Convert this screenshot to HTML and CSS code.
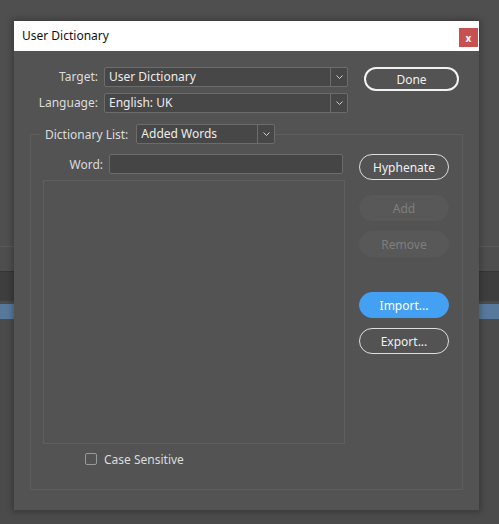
FILE: index.html
```html
<!DOCTYPE html>
<html lang="en">
<head>
    <meta charset="UTF-8">
    <title>User Dictionary</title>
    <link rel="stylesheet" href="styles.css">
</head>
<body>
    <div class="app">
        <div class="app-top"></div>
        <div class="app-rule"></div>
        <div class="app-panel"></div>
        <div class="app-selected"></div>
    </div>

    <div class="dialog">
        <div class="titlebar">
            <span class="title">User Dictionary</span>
            <button class="close-btn">x</button>
        </div>
        <div class="dialog-body">
            <div class="top-grid">
                <label class="field-label">Target:</label>
                <div class="select">
                    <span class="select-value">User Dictionary</span>
                    <span class="select-arrow"><svg width="7" height="4" viewBox="0 0 7 4"><path d="M0.5 0.5 L3.5 3.5 L6.5 0.5" fill="none" stroke="#d0d0d0" stroke-width="1"/></svg></span>
                </div>
                <button class="btn btn-default">Done</button>
                <label class="field-label">Language:</label>
                <div class="select">
                    <span class="select-value">English: UK</span>
                    <span class="select-arrow"><svg width="7" height="4" viewBox="0 0 7 4"><path d="M0.5 0.5 L3.5 3.5 L6.5 0.5" fill="none" stroke="#d0d0d0" stroke-width="1"/></svg></span>
                </div>
            </div>

            <fieldset class="dict-group">
                <legend>
                    <div class="legend-row">
                        <span class="field-label">Dictionary List:</span>
                        <div class="select select-small">
                            <span class="select-value">Added Words</span>
                            <span class="select-arrow"><svg width="7" height="4" viewBox="0 0 7 4"><path d="M0.5 0.5 L3.5 3.5 L6.5 0.5" fill="none" stroke="#d0d0d0" stroke-width="1"/></svg></span>
                        </div>
                    </div>
                </legend>
                <div class="group-grid">
                    <div class="left-col">
                        <div class="word-row">
                            <label class="field-label word-label">Word:</label>
                            <div class="text-input"></div>
                        </div>
                        <div class="word-list"></div>
                        <label class="check-row">
                            <span class="checkbox"></span>
                            Case Sensitive
                        </label>
                    </div>
                    <div class="right-col">
                        <button class="btn">Hyphenate</button>
                        <button class="btn btn-disabled btn-add">Add</button>
                        <button class="btn btn-disabled btn-remove">Remove</button>
                        <button class="btn btn-primary">Import...</button>
                        <button class="btn btn-export">Export...</button>
                    </div>
                </div>
            </fieldset>
        </div>
    </div>
</body>
</html>
```

FILE: styles.css
```css
* {
    margin: 0;
    padding: 0;
    box-sizing: border-box;
    font-family: "Noto Sans", "Liberation Sans", sans-serif;
}
body {
    background-color: #4b4b4b;
    width: 499px;
    height: 524px;
    overflow: hidden;
}

/* application behind the dialog */
.app-top {
    height: 246px;
    background-color: #4f4f4f;
}
.app-rule {
    height: 25px;
    border-top: 1px solid #5a5a5a;
    background-color: #4e4e4e;
}
.app-panel {
    height: 30px;
    background-color: #3e3e3e;
    border-top: 1px solid #363636;
    margin-bottom: 3px;
}
.app-selected {
    height: 15px;
    background-color: #58799c;
}

/* dialog */
.dialog {
    position: absolute;
    left: 14px;
    top: 21px;
    width: 465px;
    height: 489px;
    background-color: #535353;
    box-shadow: 0 0 6px 2px rgba(0, 0, 0, 0.25);
}
.titlebar {
    height: 30px;
    background-color: #fff;
    display: flex;
    justify-content: space-between;
    align-items: flex-start;
    padding-left: 8px;
}
.title {
    font-size: 12px;
    line-height: 30px;
    color: #111;
}
.close-btn {
    width: 19px;
    height: 19px;
    margin-top: 7px;
    margin-right: 1px;
    border: none;
    background-color: #c75050;
    color: #fff;
    font-size: 10px;
    font-weight: bold;
    line-height: 18px;
}
.dialog-body {
    padding: 16px 0 21px;
}
.field-label {
    font-size: 12px;
    color: #dcdcdc;
    white-space: nowrap;
}
.top-grid {
    display: grid;
    grid-template-columns: 84px 244px 95px;
    grid-template-rows: 20px 20px;
    column-gap: 6px;
    row-gap: 6px;
}
.top-grid .field-label {
    text-align: right;
    line-height: 20px;
}
.top-grid .btn-default {
    grid-column: 3;
    grid-row: 1 / 3;
    align-self: start;
    margin-left: 10px;
}

/* dropdowns */
.select {
    display: flex;
    height: 20px;
    background-color: #474747;
    border: 1px solid #6c6c6c;
    border-radius: 2px;
}
.select-value {
    flex: 1;
    padding-left: 4px;
    font-size: 12px;
    line-height: 18px;
    color: #ececec;
}
.select-arrow {
    width: 17px;
    border-left: 1px solid #6c6c6c;
    display: flex;
    align-items: center;
    justify-content: center;
}
.select-small {
    width: 139px;
}

/* buttons */
.btn {
    height: 26px;
    border: 1px solid #dedede;
    border-radius: 13px;
    background-color: transparent;
    color: #f0f0f0;
    font-size: 12px;
}
.btn-default {
    height: 24px;
    width: 95px;
    border: 2px solid #f2f2f2;
    border-radius: 12px;
}
.btn-disabled {
    border-color: #585858;
    background-color: #585858;
    color: #7e7e7e;
}
.btn-primary {
    border-color: #43a0f3;
    background-color: #43a0f3;
    color: #fff;
}

/* dictionary list group */
.dict-group {
    width: 433px;
    min-width: 0;
    margin: 11px 16px 0;
    border: 1px solid #5e5e5e;
    padding: 10px 13px 24px 12px;
}
.dict-group legend {
    margin-left: -3px;
    padding-left: 5px;
}
.legend-row {
    display: flex;
    align-items: center;
    gap: 8px;
    height: 20px;
}
.group-grid {
    display: grid;
    grid-template-columns: 302px 90px;
    column-gap: 14px;
}
.word-row {
    display: flex;
    align-items: center;
    gap: 6px;
    height: 20px;
    margin-bottom: 6px;
}
.word-label {
    width: 60px;
    text-align: right;
}
.text-input {
    width: 234px;
    height: 20px;
    background-color: #454545;
    border: 1px solid #6c6c6c;
    border-radius: 2px;
}
.word-list {
    height: 264px;
    border: 1px solid #5f5f5f;
}
.check-row {
    display: flex;
    align-items: center;
    gap: 7px;
    height: 12px;
    margin-top: 9px;
    padding-left: 42px;
    font-size: 12px;
    color: #dcdcdc;
}
.checkbox {
    width: 12px;
    height: 12px;
    border: 1px solid #9a9a9a;
    border-radius: 2px;
}
.right-col {
    display: flex;
    flex-direction: column;
}
.right-col .btn-add {
    margin-top: 15px;
}
.right-col .btn-remove,
.right-col .btn-export {
    margin-top: 10px;
}
.right-col .btn-primary {
    margin-top: 35px;
}
```
